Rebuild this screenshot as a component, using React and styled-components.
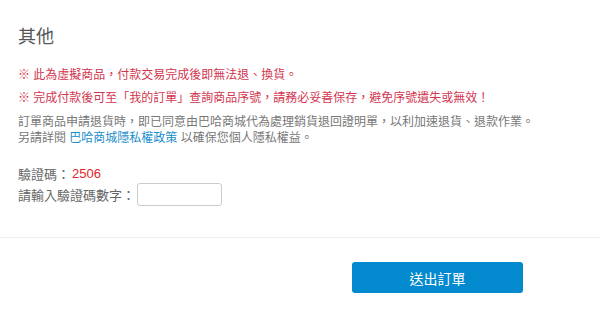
import React, { useState } from 'react';
import styled, { createGlobalStyle } from 'styled-components';

const GlobalStyle = createGlobalStyle`
  html, body {
    margin: 0;
    padding: 0;
    background: #fff;
  }
  body {
    font-family: "Liberation Sans", "Noto Sans CJK TC", sans-serif;
    color: #666;
  }
`;

const Page = styled.div`
  width: 600px;
  height: 315px;
  overflow: hidden;
`;

const Section = styled.section`
  padding: 25px 18px 0;
`;

const Title = styled.h2`
  margin: 0;
  font-size: 18px;
  font-weight: normal;
  line-height: 24px;
  color: #555;
`;

const Notices = styled.div`
  margin-top: 15px;
`;

const Warning = styled.p`
  margin: 0;
  font-size: 12px;
  line-height: 23px;
  color: #d2364f;
`;

const Info = styled.p`
  margin: 4px 0 0;
  font-size: 12px;
  line-height: 16px;
  color: #777;
`;

const Link = styled.a`
  color: #1a8dcc;
  text-decoration: none;
`;

const Verify = styled.div`
  margin-top: 18px;
  font-size: 13px;
  color: #666;
`;

const Row = styled.div`
  display: flex;
  align-items: center;
  height: ${p => p.h}px;
`;

const Code = styled.span`
  color: #e3262b;
  margin-left: 2px;
`;

const Input = styled.input`
  box-sizing: border-box;
  width: 85px;
  height: 23px;
  margin-left: 2px;
  border: 1px solid #ccc;
  border-radius: 3px;
  padding: 0 6px;
  font-size: 13px;
  outline: none;
`;

const Divider = styled.hr`
  margin: 31px 0 0;
  border: 0;
  border-top: 1px solid #f0f0f0;
`;

const Footer = styled.div`
  display: flex;
  justify-content: flex-end;
  padding: 24px 77px 0 0;
`;

const SubmitButton = styled.button`
  width: 171px;
  height: 31px;
  border: 0;
  border-radius: 3px;
  background: #0389cd;
  color: #fff;
  font-family: "Noto Sans CJK TC", sans-serif;
  font-size: 14px;
  cursor: pointer;
`;

const App = () => {
    const [code, setCode] = useState('');

    return (
        <>
            <GlobalStyle />
            <Page>
                <Section>
                    <Title>其他</Title>
                    <Notices>
                        <Warning>※ 此為虛擬商品，付款交易完成後即無法退、換貨。</Warning>
                        <Warning>※ 完成付款後可至「我的訂單」查詢商品序號，請務必妥善保存，避免序號遺失或無效！</Warning>
                        <Info>
                            訂單商品申請退貨時，即已同意由巴哈商城代為處理銷貨退回證明單，以利加速退貨、退款作業。<br />
                            另請詳閱 <Link href="#">巴哈商城隱私權政策</Link> 以確保您個人隱私權益。
                        </Info>
                    </Notices>
                    <Verify>
                        <Row h={19}>驗證碼：<Code>2506</Code></Row>
                        <Row h={23}>
                            請輸入驗證碼數字：
                            <Input value={code} onChange={e => setCode(e.target.value)} />
                        </Row>
                    </Verify>
                </Section>
                <Divider />
                <Footer>
                    <SubmitButton>送出訂單</SubmitButton>
                </Footer>
            </Page>
        </>
    );
};

export default App;
